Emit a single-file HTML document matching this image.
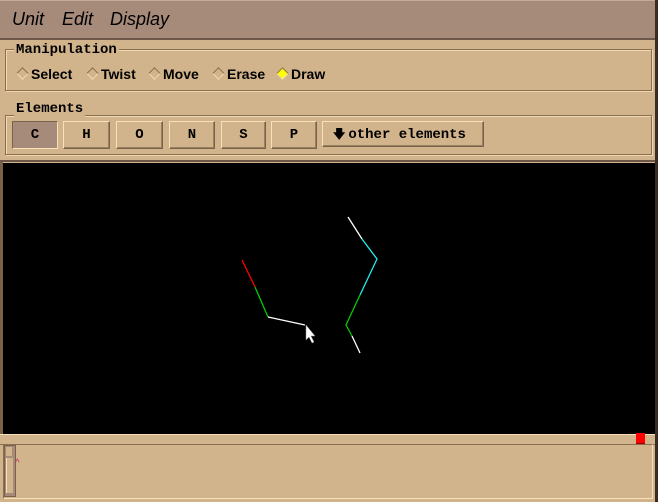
<!DOCTYPE html>
<html><head><style>
body{margin:0;width:658px;height:502px;background:#d2b48c;position:relative;overflow:hidden;font-family:"Liberation Sans",sans-serif}
.abs{position:absolute}
#menu{left:0;top:0;width:655px;height:37px;background:#a68a7a;border-top:1px solid #c8aa98;border-bottom:2px solid #6e5648}
#menu span{position:absolute;top:8px;font-style:italic;font-size:18px;color:#000}
.grp{border:1px solid #8a7050;box-shadow:1px 1px 0 #f0d8b0,inset 1px 1px 0 #f0d8b0}
.lbl{font-family:"Liberation Mono",monospace;font-weight:bold;font-size:14px;background:#d2b48c;padding:0 2px}
.rad{top:66px;font-size:14px;font-weight:bold}
.dia{display:inline-block;width:7px;height:7px;transform:rotate(45deg);border:1px solid #8a7050;border-right-color:#f0d8b0;border-bottom-color:#f0d8b0;margin-right:4px;vertical-align:1px}
.btn{top:121px;height:26px;background:#d2b48c;border:1px solid;border-color:#f8e0b8 #7a6248 #7a6248 #f8e0b8;box-shadow:inset -1px -1px 0 #9a8060;font-family:"Liberation Mono",monospace;font-weight:bold;font-size:14px;text-align:center;line-height:26px}
</style></head><body>
<div id="menu" class="abs"><span style="left:12px">Unit</span><span style="left:62px">Edit</span><span style="left:110px">Display</span></div>
<div class="abs" style="left:655px;top:0;width:3px;height:502px;background:#3a2c20"></div>
<div class="abs grp" style="left:5px;top:49px;width:645px;height:40px"></div>
<div class="abs lbl" style="left:14px;top:42px">Manipulation</div>
<div class="abs rad" style="left:18px"><span class="dia"></span>Select</div>
<div class="abs rad" style="left:88px"><span class="dia"></span>Twist</div>
<div class="abs rad" style="left:150px"><span class="dia"></span>Move</div>
<div class="abs rad" style="left:214px"><span class="dia"></span>Erase</div>
<div class="abs rad" style="left:278px"><span class="dia" style="background:#ff0"></span>Draw</div>
<div class="abs grp" style="left:5px;top:115px;width:645px;height:38px"></div>
<div class="abs lbl" style="left:14px;top:101px">Elements</div>
<div class="abs btn" style="left:12px;width:44px;background:#a68a7a;border-color:#7a6248 #f8e0b8 #f8e0b8 #7a6248;box-shadow:none">C</div>
<div class="abs btn" style="left:63px;width:45px">H</div>
<div class="abs btn" style="left:116px;width:45px">O</div>
<div class="abs btn" style="left:169px;width:44px">N</div>
<div class="abs btn" style="left:221px;width:43px">S</div>
<div class="abs btn" style="left:271px;width:44px">P</div>
<div class="abs btn" style="left:322px;width:162px;text-align:left;padding-left:10px;box-sizing:border-box"><span style="font-size:12px;margin-right:3px">&#x1F847;</span>other elements</div>
<div class="abs" style="left:0;top:160px;width:655px;height:2px;background:#6e5648"></div>
<div class="abs" style="left:0;top:162px;width:3px;height:272px;background:#7a6248"></div>
<svg class="abs" style="left:3px;top:163px" width="652" height="271">
<rect width="652" height="271" fill="#000"/>
<g transform="translate(-3,-163)" stroke-width="1.3" fill="none">
<line x1="242" y1="260" x2="255" y2="287" stroke="#f00"/>
<line x1="255" y1="287" x2="268" y2="317" stroke="#0c0"/>
<line x1="268" y1="317" x2="305" y2="325" stroke="#fff"/>
<line x1="348" y1="217" x2="362" y2="239" stroke="#fff"/>
<polyline points="362,239 377,259 360,295" stroke="#2ee"/>
<polyline points="360,295 346,325 352,336" stroke="#0c0"/>
<line x1="352" y1="336" x2="360" y2="353" stroke="#fff"/>
<path d="M306,325 L306,340 L309,337 L312,343 L314,342 L311,336 L315,336 Z" fill="#fff" stroke="#888" stroke-width="0.5"/>
</g></svg>
<div class="abs" style="left:0;top:434px;width:655px;height:9px;background:#d2b48c;border-top:1px solid #f8e0b8;border-bottom:1px solid #8a7050"></div>
<div class="abs" style="left:636px;top:433px;width:9px;height:10px;background:#f00;border-bottom:1px solid #900"></div>
<div class="abs" style="left:3px;top:444px;width:648px;height:53px;border:1px solid;border-color:#8a7050 #f8e0b8 #f8e0b8 #8a7050"></div>
<div class="abs" style="left:4px;top:445px;width:10px;height:50px;background:#a68a7a;border:1px solid #7a6248"></div>
<div class="abs" style="left:6px;top:458px;width:6px;height:35px;background:#d2b48c;border-left:1px solid #f8e0b8"></div>
<div class="abs" style="left:6px;top:447px;width:6px;height:9px;background:#d2b48c"></div>
<div class="abs" style="left:15px;top:458px;color:#c03060;font-size:10px">^</div>
</body></html>
